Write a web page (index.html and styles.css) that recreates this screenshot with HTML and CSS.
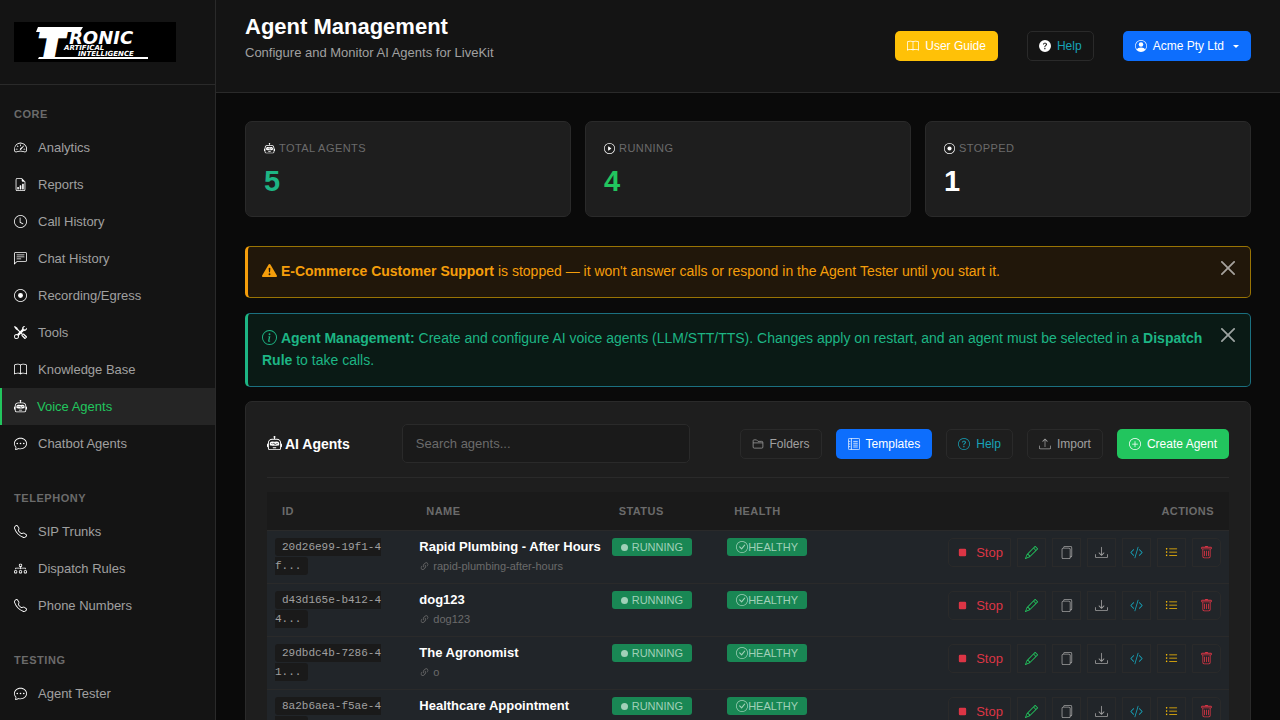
FILE: index.html
```
<!DOCTYPE html>
<html lang="en">
<head>
  <meta charset="UTF-8" />
  <meta name="viewport" content="width=device-width, initial-scale=1.0">
  <title>Agent Management</title>
  <link rel="stylesheet" href="styles.css">
</head>
<body>
  <!-- icon sprite -->
  <svg class="sprite" aria-hidden="true">
    <symbol id="i-speed" viewBox="0 0 16 16"><path d="M8 4a.5.5 0 0 1 .5.5V6a.5.5 0 0 1-1 0V4.500A.5.5 0 0 1 8 4M3.732 5.732a.5.5 0 0 1 .707 0l.915.914a.5.5 0 1 1-.708.708l-.914-.915a.5.5 0 0 1 0-.707M2 10a.5.5 0 0 1 .5-.5h1.586a.5.5 0 0 1 0 1H2.500A.5.5 0 0 1 2 10m9.500 0a.5.5 0 0 1 .5-.5h1.500a.5.5 0 0 1 0 1H12a.5.5 0 0 1-.5-.5m.754-4.246a.39.39 0 0 0-.527-.02L7.547 9.310a.91.91 0 1 0 1.302 1.258l3.434-4.297a.39.39 0 0 0-.029-.518z"/><path fill-rule="evenodd" d="M0 10a8 8 0 1 1 15.547 2.661c-.442 1.253-1.845 1.602-2.932 1.250C11.309 13.488 9.475 13 8 13c-1.474 0-3.310.488-4.615.911-1.087.352-2.490.003-2.932-1.250A8 8 0 0 1 0 10m8-7a7 7 0 0 0-6.603 9.329c.203.575.923.876 1.680.630C4.397 12.533 6.358 12 8 12s3.604.532 4.923.960c.757.245 1.477-.056 1.680-.631A7 7 0 0 0 8 3"/></symbol>
    <symbol id="i-report" viewBox="0 0 16 16"><path d="M10 13.500a.5.5 0 0 0 .5.5h1a.5.5 0 0 0 .5-.5v-6a.5.5 0 0 0-.5-.5h-1a.5.5 0 0 0-.5.5zm-2.500.5a.5.5 0 0 1-.5-.5v-4a.5.5 0 0 1 .5-.5h1a.5.5 0 0 1 .5.5v4a.5.5 0 0 1-.5.5zm-3 0a.5.5 0 0 1-.5-.5v-2a.5.5 0 0 1 .5-.5h1a.5.5 0 0 1 .5.5v2a.5.5 0 0 1-.5.5z"/><path d="M14 14V4.500L9.500 0H4a2 2 0 0 0-2 2v12a2 2 0 0 0 2 2h8a2 2 0 0 0 2-2M9.500 3A1.500 1.500 0 0 0 11 4.500h2V14a1 1 0 0 1-1 1H4a1 1 0 0 1-1-1V2a1 1 0 0 1 1-1h5.500z"/></symbol>
    <symbol id="i-clock" viewBox="0 0 16 16"><path d="M8 3.500a.5.5 0 0 0-1 0V9a.5.5 0 0 0 .252.434l3.500 2a.5.5 0 0 0 .496-.868L8 8.710z"/><path d="M8 16A8 8 0 1 0 8 0a8 8 0 0 0 0 16m7-8A7 7 0 1 1 1 8a7 7 0 0 1 14 0"/></symbol>
    <symbol id="i-chat-text" viewBox="0 0 16 16"><path d="M14 1a1 1 0 0 1 1 1v8a1 1 0 0 1-1 1H4.414A2 2 0 0 0 3 11.586l-2 2V2a1 1 0 0 1 1-1zM2 0a2 2 0 0 0-2 2v12.793a.5.5 0 0 0 .854.353l2.853-2.853A1 1 0 0 1 4.414 12H14a2 2 0 0 0 2-2V2a2 2 0 0 0-2-2z"/><path d="M3 3.500a.5.5 0 0 1 .5-.5h9a.5.5 0 0 1 0 1h-9a.5.5 0 0 1-.5-.5M3 6a.5.5 0 0 1 .5-.5h9a.5.5 0 0 1 0 1h-9A.5.5 0 0 1 3 6m0 2.500a.5.5 0 0 1 .5-.5h5a.5.5 0 0 1 0 1h-5a.5.5 0 0 1-.5-.5"/></symbol>
    <symbol id="i-record" viewBox="0 0 16 16"><path d="M8 15A7 7 0 1 1 8 1a7 7 0 0 1 0 14m0 1A8 8 0 1 0 8 0a8 8 0 0 0 0 16"/><path d="M11 8a3 3 0 1 1-6 0 3 3 0 0 1 6 0"/></symbol>
    <symbol id="i-tools" viewBox="0 0 16 16"><path d="M1 0 0 1l2.200 3.081a1 1 0 0 0 .815.419h.070a1 1 0 0 1 .708.293l2.675 2.675-2.617 2.654A3.003 3.003 0 0 0 0 13a3 3 0 1 0 5.878-.851l2.654-2.617.968.968-.305.914a1 1 0 0 0 .242 1.023l3.270 3.270a.997.997 0 0 0 1.414 0l1.586-1.586a.997.997 0 0 0 0-1.414l-3.270-3.270a1 1 0 0 0-1.023-.242L10.500 9.500l-.960-.960 2.680-2.643A3.005 3.005 0 0 0 16 3q0-.405-.102-.777l-2.140 2.141L12 4l-.364-1.757L13.777.102a3 3 0 0 0-3.675 3.680L7.462 6.460 4.793 3.793a1 1 0 0 1-.293-.707v-.071a1 1 0 0 0-.419-.814zm9.646 10.646a.5.5 0 0 1 .708 0l2.914 2.915a.5.5 0 0 1-.707.707l-2.915-2.914a.5.5 0 0 1 0-.708M3 11l.471.242.529.026.287.445.445.287.026.529L5 13l-.242.471-.026.529-.445.287-.287.445-.529.026L3 15l-.471-.242L2 14.732l-.287-.445L1.268 14l-.026-.529L1 13l.242-.471.026-.529.445-.287.287-.445.529-.026z"/></symbol>
    <symbol id="i-book" viewBox="0 0 16 16"><path d="M1 2.828c.885-.370 2.154-.769 3.388-.893 1.330-.134 2.458.063 3.112.752v9.746c-.935-.530-2.120-.603-3.213-.493-1.180.120-2.370.461-3.287.811zm7.500-.141c.654-.689 1.782-.886 3.112-.752 1.234.124 2.503.523 3.388.893v9.923c-.918-.350-2.107-.692-3.287-.810-1.094-.111-2.278-.039-3.213.492zM8 1.783C7.015.936 5.587.810 4.287.940c-1.514.153-3.042.672-3.994 1.105A.5.5 0 0 0 0 2.500v11a.5.5 0 0 0 .707.455c.882-.400 2.303-.881 3.680-1.020 1.409-.142 2.590.087 3.223.877a.5.5 0 0 0 .780 0c.633-.790 1.814-1.019 3.222-.877 1.378.139 2.800.620 3.681 1.020A.5.5 0 0 0 16 13.500v-11a.5.5 0 0 0-.293-.455c-.952-.433-2.480-.952-3.994-1.105C10.413.809 8.985.936 8 1.783"/></symbol>
    <symbol id="i-robot" viewBox="0 0 16 16"><path d="M6 12.500a.5.5 0 0 1 .5-.5h3a.5.5 0 0 1 0 1h-3a.5.5 0 0 1-.5-.5M3 8.062C3 6.760 4.235 5.765 5.530 5.886a26.600 26.600 0 0 0 4.940 0C11.765 5.765 13 6.760 13 8.062v1.157a.93.93 0 0 1-.765.935c-.845.147-2.340.346-4.235.346s-3.390-.200-4.235-.346A.93.93 0 0 1 3 9.219zm4.542-.827a.25.25 0 0 0-.217.068l-.920.900a25 25 0 0 1-1.871-.183.25.25 0 0 0-.068.495c.550.076 1.232.149 2.020.193a.25.25 0 0 0 .189-.071l.754-.736.847 1.710a.25.25 0 0 0 .404.062l.932-.970a25 25 0 0 0 1.922-.188.25.25 0 0 0-.068-.495c-.538.074-1.207.145-1.980.189a.25.25 0 0 0-.166.076l-.754.785-.842-1.700a.25.25 0 0 0-.182-.135"/><path d="M8.500 1.866a1 1 0 1 0-1 0V3h-2A4.500 4.500 0 0 0 1 7.500V8a1 1 0 0 0-1 1v2a1 1 0 0 0 1 1v1a2 2 0 0 0 2 2h10a2 2 0 0 0 2-2v-1a1 1 0 0 0 1-1V9a1 1 0 0 0-1-1v-.5A4.500 4.500 0 0 0 10.500 3h-2zM14 7.500V13a1 1 0 0 1-1 1H3a1 1 0 0 1-1-1V7.500A3.500 3.500 0 0 1 5.500 4h5A3.500 3.500 0 0 1 14 7.500"/></symbol>
    <symbol id="i-chat-dots" viewBox="0 0 16 16"><path d="M5 8a1 1 0 1 1-2 0 1 1 0 0 1 2 0m4 0a1 1 0 1 1-2 0 1 1 0 0 1 2 0m3 1a1 1 0 1 0 0-2 1 1 0 0 0 0 2"/><path d="m2.165 15.803.020-.004c1.830-.363 2.948-.842 3.468-1.105A9 9 0 0 0 8 15c4.418 0 8-3.134 8-7s-3.582-7-8-7-8 3.134-8 7c0 1.760.743 3.370 1.970 4.600a10.400 10.400 0 0 1-.524 2.318l-.003.011a11 11 0 0 1-.244.637c-.079.186.074.394.273.362a22 22 0 0 0 .693-.125m.8-3.108a1 1 0 0 0-.287-.801C1.618 10.830 1 9.468 1 8c0-3.192 3.004-6 7-6s7 2.808 7 6-3.004 6-7 6a8 8 0 0 1-2.088-.272 1 1 0 0 0-.711.074c-.387.196-1.240.570-2.634.893a11 11 0 0 0 .398-2"/></symbol>
    <symbol id="i-phone" viewBox="0 0 16 16"><path d="M3.654 1.328a.678.678 0 0 0-1.015-.063L1.605 2.300c-.483.484-.661 1.169-.450 1.770a17.600 17.600 0 0 0 4.168 6.608 17.600 17.600 0 0 0 6.608 4.168c.601.211 1.286.033 1.770-.450l1.034-1.034a.678.678 0 0 0-.063-1.015l-2.307-1.794a.68.68 0 0 0-.580-.122l-2.190.547a1.750 1.750 0 0 1-1.657-.459L5.482 8.062a1.750 1.750 0 0 1-.460-1.657l.548-2.190a.68.68 0 0 0-.122-.580zM1.884.511a1.745 1.745 0 0 1 2.612.163L6.290 2.980c.329.423.445.974.315 1.494l-.547 2.190a.68.68 0 0 0 .178.643l2.457 2.457a.68.68 0 0 0 .644.178l2.189-.547a1.750 1.750 0 0 1 1.494.315l2.306 1.794c.829.645.905 1.870.163 2.611l-1.034 1.034c-.740.740-1.846 1.065-2.877.702a18.600 18.600 0 0 1-7.010-4.420 18.600 18.600 0 0 1-4.420-7.009c-.362-1.030-.037-2.137.703-2.877z"/></symbol>
    <symbol id="i-diagram" viewBox="0 0 16 16"><path fill-rule="evenodd" d="M6 3.500A1.500 1.500 0 0 1 7.500 2h1A1.500 1.500 0 0 1 10 3.500v1A1.500 1.500 0 0 1 8.500 6v1H14a.5.5 0 0 1 .5.5v1a.5.5 0 0 1-1 0V8h-5v.5a.5.5 0 0 1-1 0V8h-5v.5a.5.5 0 0 1-1 0v-1A.5.5 0 0 1 2 7h5.500V6A1.500 1.500 0 0 1 6 4.500zM8.500 5a.5.5 0 0 0 .5-.5v-1a.5.5 0 0 0-.5-.5h-1a.5.5 0 0 0-.5.5v1a.5.5 0 0 0 .5.5zM0 11.500A1.500 1.500 0 0 1 1.500 10h1A1.500 1.500 0 0 1 4 11.500v1A1.500 1.500 0 0 1 2.500 14h-1A1.500 1.500 0 0 1 0 12.500zm1.500-.5a.5.5 0 0 0-.5.5v1a.5.5 0 0 0 .5.5h1a.5.5 0 0 0 .5-.5v-1a.5.5 0 0 0-.5-.5zm4.500.5A1.500 1.500 0 0 1 7.500 10h1a1.500 1.500 0 0 1 1.500 1.500v1A1.500 1.500 0 0 1 8.500 14h-1A1.500 1.500 0 0 1 6 12.500zm1.500-.5a.5.5 0 0 0-.5.5v1a.5.5 0 0 0 .5.5h1a.5.5 0 0 0 .5-.5v-1a.5.5 0 0 0-.5-.5zm4.500.5a1.500 1.500 0 0 1 1.500-1.500h1a1.500 1.500 0 0 1 1.500 1.500v1a1.500 1.500 0 0 1-1.500 1.500h-1a1.500 1.500 0 0 1-1.500-1.500zm1.500-.5a.5.5 0 0 0-.5.5v1a.5.5 0 0 0 .5.5h1a.5.5 0 0 0 .5-.5v-1a.5.5 0 0 0-.5-.5z"/></symbol>
    <symbol id="i-play" viewBox="0 0 16 16"><path d="M8 15A7 7 0 1 1 8 1a7 7 0 0 1 0 14m0 1A8 8 0 1 0 8 0a8 8 0 0 0 0 16"/><path d="M6.271 5.055a.5.5 0 0 1 .520.038l3.500 2.500a.5.5 0 0 1 0 .814l-3.500 2.500A.5.5 0 0 1 6 10.500v-5a.5.5 0 0 1 .271-.445"/></symbol>
    <symbol id="i-question-fill" viewBox="0 0 16 16"><path d="M16 8A8 8 0 1 1 0 8a8 8 0 0 1 16 0M5.496 6.033h.825c.138 0 .248-.113.266-.250.090-.656.540-1.134 1.342-1.134.686 0 1.314.343 1.314 1.168 0 .635-.374.927-.965 1.371-.673.489-1.206 1.060-1.168 1.987l.003.217a.25.25 0 0 0 .250.246h.811a.25.25 0 0 0 .250-.250v-.105c0-.718.273-.927 1.010-1.486.609-.463 1.244-.977 1.244-2.056 0-1.511-1.276-2.241-2.673-2.241-1.267 0-2.655.590-2.750 2.286a.237.237 0 0 0 .241.247m2.325 6.443c.610 0 1.029-.394 1.029-.927 0-.552-.420-.940-1.029-.940-.584 0-1.009.388-1.009.940 0 .533.425.927 1.010.927z"/></symbol>
    <symbol id="i-question" viewBox="0 0 16 16"><path d="M8 15A7 7 0 1 1 8 1a7 7 0 0 1 0 14m0 1A8 8 0 1 0 8 0a8 8 0 0 0 0 16"/><path d="M5.255 5.786a.237.237 0 0 0 .241.247h.825c.138 0 .248-.113.266-.250.090-.656.540-1.134 1.342-1.134.686 0 1.314.343 1.314 1.168 0 .635-.374.927-.965 1.371-.673.489-1.206 1.060-1.168 1.987l.003.217a.25.25 0 0 0 .250.246h.811a.25.25 0 0 0 .250-.250v-.105c0-.718.273-.927 1.010-1.486.609-.463 1.244-.977 1.244-2.056 0-1.511-1.276-2.241-2.673-2.241-1.267 0-2.655.590-2.750 2.286m1.557 5.763c0 .533.425.927 1.010.927.609 0 1.028-.394 1.028-.927 0-.552-.420-.940-1.029-.940-.584 0-1.009.388-1.009.940"/></symbol>
    <symbol id="i-person" viewBox="0 0 16 16"><path d="M11 6a3 3 0 1 1-6 0 3 3 0 0 1 6 0"/><path fill-rule="evenodd" d="M0 8a8 8 0 1 1 16 0A8 8 0 0 1 0 8m8-7a7 7 0 0 0-5.468 11.370C3.242 11.226 4.805 10 8 10s4.757 1.225 5.468 2.370A7 7 0 0 0 8 1"/></symbol>
    <symbol id="i-warn" viewBox="0 0 16 16"><path d="M8.982 1.566a1.130 1.130 0 0 0-1.960 0L.165 13.233c-.457.778.091 1.767.980 1.767h13.713c.889 0 1.438-.990.980-1.767zM8 5c.535 0 .954.462.900.995l-.350 3.507a.552.552 0 0 1-1.100 0L7.100 5.995A.905.905 0 0 1 8 5m.002 6a1 1 0 1 1 0 2 1 1 0 0 1 0-2"/></symbol>
    <symbol id="i-info" viewBox="0 0 16 16"><path d="M8 15A7 7 0 1 1 8 1a7 7 0 0 1 0 14m0 1A8 8 0 1 0 8 0a8 8 0 0 0 0 16"/><path d="m8.930 6.588-2.290.287-.082.380.450.083c.294.070.352.176.288.469l-.738 3.468c-.194.897.105 1.319.808 1.319.545 0 1.178-.252 1.465-.598l.088-.416c-.200.176-.492.246-.686.246-.275 0-.375-.193-.304-.533zM9 4.500a1 1 0 1 1-2 0 1 1 0 0 1 2 0"/></symbol>
    <symbol id="i-close" viewBox="0 0 16 16"><path d="M.293.293a1 1 0 0 1 1.414 0L8 6.586 14.293.293a1 1 0 1 1 1.414 1.414L9.414 8l6.293 6.293a1 1 0 0 1-1.414 1.414L8 9.414l-6.293 6.293a1 1 0 0 1-1.414-1.414L6.586 8 .293 1.707a1 1 0 0 1 0-1.414"/></symbol>
    <symbol id="i-folder" viewBox="0 0 16 16"><path d="M1.500 12V3.500A1 1 0 0 1 2.500 2.500H6L8 4.500H13A1.500 1.500 0 0 1 14.500 6V12A1.500 1.500 0 0 1 13 13.500H3A1.500 1.500 0 0 1 1.500 12ZM1.500 6.500H14.500" fill="none" stroke="currentColor"/></symbol>
    <symbol id="i-template" viewBox="0 0 16 16"><path d="M2 .5H14A1.500 1.500 0 0 1 15.500 2V14A1.500 1.500 0 0 1 14 15.500H2A1.500 1.500 0 0 1 .5 14V2A1.500 1.500 0 0 1 2 .5M4.500 .5V15.500M7 4.500H13M7 7H13M7 9.500H13M7 12H13M1 4.500H3M1 8H3M1 11.500H3" fill="none" stroke="currentColor"/></symbol>
    <symbol id="i-upload" viewBox="0 0 16 16"><path d="M.5 9.900a.5.5 0 0 1 .5.5v2.500a1 1 0 0 0 1 1h12a1 1 0 0 0 1-1v-2.500a.5.5 0 0 1 1 0v2.500a2 2 0 0 1-2 2H2a2 2 0 0 1-2-2v-2.500a.5.5 0 0 1 .5-.5"/><path d="M7.646 1.146a.5.5 0 0 1 .708 0l3 3a.5.5 0 0 1-.708.708L8.500 2.707V11.500a.5.5 0 0 1-1 0V2.707L5.354 4.854a.5.5 0 1 1-.708-.708z"/></symbol>
    <symbol id="i-download" viewBox="0 0 16 16"><path d="M.5 9.900a.5.5 0 0 1 .5.5v2.500a1 1 0 0 0 1 1h12a1 1 0 0 0 1-1v-2.500a.5.5 0 0 1 1 0v2.500a2 2 0 0 1-2 2H2a2 2 0 0 1-2-2v-2.500a.5.5 0 0 1 .5-.5"/><path d="M7.646 11.854a.5.5 0 0 0 .708 0l3-3a.5.5 0 0 0-.708-.708L8.500 10.293V1.500a.5.5 0 0 0-1 0v8.793L5.354 8.146a.5.5 0 1 0-.708.708z"/></symbol>
    <symbol id="i-plus" viewBox="0 0 16 16"><path d="M8 15A7 7 0 1 1 8 1a7 7 0 0 1 0 14m0 1A8 8 0 1 0 8 0a8 8 0 0 0 0 16"/><path d="M8 4a.5.5 0 0 1 .5.5v3h3a.5.5 0 0 1 0 1h-3v3a.5.5 0 0 1-1 0v-3h-3a.5.5 0 0 1 0-1h3v-3A.5.5 0 0 1 8 4"/></symbol>
    <symbol id="i-link" viewBox="0 0 16 16"><path d="M4.715 6.542 3.343 7.914a3 3 0 1 0 4.243 4.243l1.828-1.829A3 3 0 0 0 8.586 5.500L8 6.086a1 1 0 0 0-.154.199 2 2 0 0 1 .861 3.337L6.880 11.450a2 2 0 1 1-2.830-2.830l.793-.792a4 4 0 0 1-.128-1.287z"/><path d="M6.586 4.672A3 3 0 0 0 7.414 9.500l.775-.776a2 2 0 0 1-.896-3.346L9.120 3.550a2 2 0 1 1 2.830 2.830l-.793.792c.112.420.155.855.128 1.287l1.372-1.372a3 3 0 1 0-4.243-4.243z"/></symbol>
    <symbol id="i-dot" viewBox="0 0 16 16"><circle cx="8" cy="8" r="8"/></symbol>
    <symbol id="i-check" viewBox="0 0 16 16"><path d="M8 15A7 7 0 1 1 8 1a7 7 0 0 1 0 14m0 1A8 8 0 1 0 8 0a8 8 0 0 0 0 16"/><path d="m10.970 4.970-.020.022-3.473 4.425-2.093-2.094a.75.75 0 0 0-1.060 1.060L6.970 11.030a.75.75 0 0 0 1.079-.020l3.992-4.990a.75.75 0 0 0-1.071-1.050"/></symbol>
    <symbol id="i-stop" viewBox="0 0 16 16"><path d="M5 3.500h6A1.500 1.500 0 0 1 12.500 5v6a1.500 1.500 0 0 1-1.500 1.500H5A1.500 1.500 0 0 1 3.500 11V5A1.500 1.500 0 0 1 5 3.500"/></symbol>
    <symbol id="i-pencil" viewBox="0 0 16 16"><path d="M12.146.146a.5.5 0 0 1 .708 0l3 3a.5.5 0 0 1 0 .708l-10 10a.5.5 0 0 1-.168.110l-5 2a.5.5 0 0 1-.650-.650l2-5a.5.5 0 0 1 .110-.168zM11.207 2.500 13.500 4.793 14.793 3.500 12.500 1.207zm1.586 3L10.500 3.207 4 9.707V10h.5a.5.5 0 0 1 .5.5v.5h.5a.5.5 0 0 1 .5.5v.5h.293zm-9.761 5.175-.106.106-1.528 3.821 3.821-1.528.106-.106A.5.5 0 0 1 5 12.500V12h-.5a.5.5 0 0 1-.5-.5V11h-.5a.5.5 0 0 1-.468-.325"/></symbol>
    <symbol id="i-files" viewBox="0 0 16 16"><path d="M13 0H6a2 2 0 0 0-2 2 2 2 0 0 0-2 2v10a2 2 0 0 0 2 2h7a2 2 0 0 0 2-2 2 2 0 0 0 2-2V2a2 2 0 0 0-2-2m0 13V4a2 2 0 0 0-2-2H5a1 1 0 0 1 1-1h7a1 1 0 0 1 1 1v10a1 1 0 0 1-1 1M3 4a1 1 0 0 1 1-1h7a1 1 0 0 1 1 1v10a1 1 0 0 1-1 1H4a1 1 0 0 1-1-1z"/></symbol>
    <symbol id="i-code" viewBox="0 0 16 16"><path d="M10.478 1.647a.5.5 0 1 0-.956-.294l-4 13a.5.5 0 0 0 .956.294zM4.854 4.146a.5.5 0 0 1 0 .708L1.707 8l3.147 3.146a.5.5 0 0 1-.708.708l-3.500-3.500a.5.5 0 0 1 0-.708l3.500-3.500a.5.5 0 0 1 .708 0m6.292 0a.5.5 0 0 0 0 .708L14.293 8l-3.147 3.146a.5.5 0 0 0 .708.708l3.500-3.500a.5.5 0 0 0 0-.708l-3.500-3.500a.5.5 0 0 0-.708 0"/></symbol>
    <symbol id="i-list" viewBox="0 0 16 16"><path fill-rule="evenodd" d="M5 11.500a.5.5 0 0 1 .5-.5h9a.5.5 0 0 1 0 1h-9a.5.5 0 0 1-.5-.5m0-4a.5.5 0 0 1 .5-.5h9a.5.5 0 0 1 0 1h-9a.5.5 0 0 1-.5-.5m0-4a.5.5 0 0 1 .5-.5h9a.5.5 0 0 1 0 1h-9a.5.5 0 0 1-.5-.5m-3 1a1 1 0 1 0 0-2 1 1 0 0 0 0 2m0 4a1 1 0 1 0 0-2 1 1 0 0 0 0 2m0 4a1 1 0 1 0 0-2 1 1 0 0 0 0 2"/></symbol>
    <symbol id="i-trash" viewBox="0 0 16 16"><path d="M5.500 5.500A.5.5 0 0 1 6 6v6a.5.5 0 0 1-1 0V6a.5.5 0 0 1 .5-.5m2.500 0a.5.5 0 0 1 .5.5v6a.5.5 0 0 1-1 0V6a.5.5 0 0 1 .5-.5m3 .5a.5.5 0 0 0-1 0v6a.5.5 0 0 0 1 0z"/><path d="M14.500 3a1 1 0 0 1-1 1H13v9a2 2 0 0 1-2 2H5a2 2 0 0 1-2-2V4h-.5a1 1 0 0 1-1-1V2a1 1 0 0 1 1-1H6a1 1 0 0 1 1-1h2a1 1 0 0 1 1 1h3.500a1 1 0 0 1 1 1zM4.118 4 4 4.059V13a1 1 0 0 0 1 1h6a1 1 0 0 0 1-1V4.059L11.882 4zM2.500 3h11V2h-11z"/></symbol>
  </svg>

  <div class="app">
    <aside class="sidebar">
      <div class="brand">
        <a href="#" class="brand-link" aria-label="Home">
          <svg class="logo" viewBox="0 0 162 40">
            <rect width="162" height="40" fill="#000"/>
            <path d="M24 5h45l-3 5H22zM25 35h109v2H24z"/>
            <text class="logo-t" x="26" y="34">T</text>
            <text class="logo-name" x="55" y="22">RONIC</text>
            <text class="logo-sub" x="50" y="28">ARTIFICAL</text>
            <text class="logo-sub" x="64" y="34">INTELLIGENCE</text>
          </svg>
        </a>
      </div>
      <nav class="nav">
        <div class="nav-section">
          <div class="nav-title">Core</div>
          <a href="#" class="nav-item"><svg class="icon"><use href="#i-speed"/></svg>Analytics</a>
          <a href="#" class="nav-item"><svg class="icon"><use href="#i-report"/></svg>Reports</a>
          <a href="#" class="nav-item"><svg class="icon"><use href="#i-clock"/></svg>Call History</a>
          <a href="#" class="nav-item"><svg class="icon"><use href="#i-chat-text"/></svg>Chat History</a>
          <a href="#" class="nav-item"><svg class="icon"><use href="#i-record"/></svg>Recording/Egress</a>
          <a href="#" class="nav-item"><svg class="icon"><use href="#i-tools"/></svg>Tools</a>
          <a href="#" class="nav-item"><svg class="icon"><use href="#i-book"/></svg>Knowledge Base</a>
          <a href="#" class="nav-item active"><svg class="icon"><use href="#i-robot"/></svg>Voice Agents</a>
          <a href="#" class="nav-item"><svg class="icon"><use href="#i-chat-dots"/></svg>Chatbot Agents</a>
        </div>
        <div class="nav-section">
          <div class="nav-title">Telephony</div>
          <a href="#" class="nav-item"><svg class="icon"><use href="#i-phone"/></svg>SIP Trunks</a>
          <a href="#" class="nav-item"><svg class="icon"><use href="#i-diagram"/></svg>Dispatch Rules</a>
          <a href="#" class="nav-item"><svg class="icon"><use href="#i-phone"/></svg>Phone Numbers</a>
        </div>
        <div class="nav-section">
          <div class="nav-title">Testing</div>
          <a href="#" class="nav-item"><svg class="icon"><use href="#i-chat-dots"/></svg>Agent Tester</a>
        </div>
      </nav>
    </aside>

    <main class="main">
      <header class="topbar">
        <div>
          <h1>Agent Management</h1>
          <p class="subtitle">Configure and Monitor AI Agents for LiveKit</p>
        </div>
        <div class="topbar-actions">
          <a href="#" class="btn btn-warning"><svg class="icon"><use href="#i-book"/></svg>User Guide</a>
          <button type="button" class="btn btn-outline info"><svg class="icon white"><use href="#i-question-fill"/></svg>Help</button>
          <button type="button" class="btn btn-primary"><svg class="icon"><use href="#i-person"/></svg>Acme Pty Ltd<span class="caret"></span></button>
        </div>
      </header>

      <div class="content">
        <div class="stats">
          <div class="stat">
            <div class="stat-label"><svg class="icon"><use href="#i-robot"/></svg>Total Agents</div>
            <div class="stat-value teal">5</div>
          </div>
          <div class="stat">
            <div class="stat-label"><svg class="icon"><use href="#i-play"/></svg>Running</div>
            <div class="stat-value green">4</div>
          </div>
          <div class="stat">
            <div class="stat-label"><svg class="icon"><use href="#i-record"/></svg>Stopped</div>
            <div class="stat-value">1</div>
          </div>
        </div>

        <div class="alert alert-warning" role="alert">
          <svg class="icon"><use href="#i-warn"/></svg>
          <strong>E-Commerce Customer Support</strong> is stopped — it won't answer calls or respond in the Agent Tester until you start it.
          <button type="button" class="alert-close" aria-label="Close"><svg class="icon"><use href="#i-close"/></svg></button>
        </div>
        <div class="alert alert-info" role="alert">
          <svg class="icon"><use href="#i-info"/></svg>
          <strong>Agent Management:</strong> Create and configure AI voice agents (LLM/STT/TTS). Changes apply on restart, and an agent must be selected in a <strong>Dispatch Rule</strong> to take calls.
          <button type="button" class="alert-close" aria-label="Close"><svg class="icon"><use href="#i-close"/></svg></button>
        </div>

        <section class="card">
          <div class="card-header">
            <h2><svg class="icon"><use href="#i-robot"/></svg>AI Agents</h2>
            <input type="text" class="search" id="search" placeholder="Search agents..." aria-label="Search agents">
            <div class="card-actions">
              <button type="button" class="btn btn-outline"><svg class="icon"><use href="#i-folder"/></svg>Folders</button>
              <button type="button" class="btn btn-primary"><svg class="icon"><use href="#i-template"/></svg>Templates</button>
              <button type="button" class="btn btn-outline info"><svg class="icon"><use href="#i-question"/></svg>Help</button>
              <button type="button" class="btn btn-outline"><svg class="icon"><use href="#i-upload"/></svg>Import</button>
              <button type="button" class="btn btn-success"><svg class="icon"><use href="#i-plus"/></svg>Create Agent</button>
            </div>
          </div>
          <table class="agents">
            <thead>
              <tr>
                <th class="col-id">ID</th>
                <th class="col-name">Name</th>
                <th class="col-state">Status</th>
                <th class="col-state">Health</th>
                <th class="col-actions">Actions</th>
              </tr>
            </thead>
            <tbody id="agentRows"></tbody>
          </table>
        </section>
      </div>
    </main>
  </div>

  <script>
    const agents = [
      { id: "20d26e99-19f1-4f...", name: "Rapid Plumbing - After Hours", slug: "rapid-plumbing-after-hours" },
      { id: "d43d165e-b412-44...", name: "dog123", slug: "dog123" },
      { id: "29dbdc4b-7286-41...", name: "The Agronomist", slug: "o" },
      { id: "8a2b6aea-f5ae-4f...", name: "Healthcare Appointment", slug: "healthcare-appointment" }
    ];

    const actions = [
      ["pencil", "Edit", "green"],
      ["files", "Duplicate", "grey"],
      ["download", "Export", "grey"],
      ["code", "Embed code", "cyan"],
      ["list", "Logs", "yellow"],
      ["trash", "Delete", "red"]
    ];

    function icon(name) {
      return `<svg class="icon"><use href="#i-${name}"/></svg>`;
    }

    function renderAgents(list) {
      const buttons = actions.map(a =>
        `<button type="button" class="act ${a[2]}" title="${a[1]}" aria-label="${a[1]}">${icon(a[0])}</button>`
      ).join("");

      document.getElementById("agentRows").innerHTML = list.map(a => `
        <tr>
          <td><div class="id-wrap"><code>${a.id}</code></div></td>
          <td>
            <div class="agent-name">${a.name}</div>
            <div class="agent-slug">${icon("link")}${a.slug}</div>
          </td>
          <td><span class="badge running">${icon("dot")}Running</span></td>
          <td><span class="badge healthy">${icon("check")}Healthy</span></td>
          <td><div class="row-actions">
            <button type="button" class="act act-stop red">${icon("stop")}Stop</button>${buttons}
          </div></td>
        </tr>`).join("");
    }

    document.getElementById("search").addEventListener("input", e => {
      const q = e.target.value.toLowerCase();
      renderAgents(agents.filter(a => a.name.toLowerCase().includes(q)));
    });

    renderAgents(agents);
  </script>
</body>
</html>
```

FILE: styles.css
```
* {
  box-sizing: border-box;
}
body {
  margin: 0;
  background: #0a0a0a;
  color: #fff;
  font-family: "Liberation Sans", Arial, sans-serif;
  font-size: 14px;
  line-height: 22px;
}
h1, h2, p {
  margin: 0;
}
a {
  text-decoration: none;
}
button, input {
  font-family: inherit;
}
.sprite {
  display: none;
}
.icon {
  width: 13px;
  height: 13px;
  fill: currentColor;
  flex: none;
}
.green { color: #22c55e; }
.teal { color: #1db584; }
.grey { color: #a0a0a0; }
.cyan { color: #17a2b8; }
.yellow { color: #ffc107; }
.red { color: #dc3545; }
.white { color: #fff; }

.app {
  display: flex;
  height: 100vh;
}

/* sidebar */
.sidebar {
  width: 216px;
  flex: none;
  background: #141414;
  border-right: 1px solid #2a2a2a;
  overflow: hidden;
}
.brand {
  padding: 22px 14px;
  border-bottom: 1px solid #2a2a2a;
}
.brand-link, .logo {
  display: block;
}
.logo {
  width: 162px;
  height: 40px;
  fill: #fff;
  font-family: "DejaVu Sans", sans-serif;
  font-weight: bold;
  font-style: italic;
}
.logo-t {
  font-size: 34px;
  stroke: #fff;
  stroke-width: 5px;
}
.logo-name { font-size: 18px; }
.logo-sub { font-size: 7px; }
.nav {
  padding: 14px 0;
}
.nav-section {
  margin-bottom: 21px;
}
.nav-title {
  padding: 7px 14px;
  font-size: 11px;
  font-weight: bold;
  line-height: 16px;
  letter-spacing: 0.05em;
  text-transform: uppercase;
  color: #6b6b6b;
}
.nav-item {
  display: flex;
  align-items: center;
  gap: 11px;
  height: 37px;
  padding: 0 14px;
  font-size: 13px;
  color: #a0a0a0;
}
.nav-item .icon {
  color: #fff;
}
.nav-item.active {
  padding-left: 12px;
  gap: 10px;
  border-left: 2px solid #22c55e;
  background: #252525;
  color: #22c55e;
}

/* header */
.main {
  flex: 1;
  min-width: 0;
  overflow-y: auto;
  scrollbar-width: none;
}
.topbar {
  display: flex;
  justify-content: space-between;
  align-items: center;
  padding: 14px 29px;
  background: #141414;
  border-bottom: 1px solid #2a2a2a;
}
h1 {
  font-size: 22px;
  line-height: 26px;
}
.subtitle {
  margin: 3px 0 15px;
  font-size: 13px;
  line-height: 20px;
  color: #a0a0a0;
}
.topbar-actions {
  display: flex;
  gap: 29px;
}
.btn {
  display: inline-flex;
  align-items: center;
  gap: 6px;
  height: 30px;
  padding: 0 11px;
  border: 1px solid transparent;
  border-radius: 5px;
  font-size: 12px;
  line-height: 18px;
  color: #fff;
  white-space: nowrap;
  cursor: pointer;
}
.btn .icon {
  width: 12px;
  height: 12px;
}
.btn-warning { background: #ffc107; }
.btn-primary { background: #0d6efd; }
.btn-success { background: #22c55e; }
.btn-outline {
  background: transparent;
  border-color: #2a2a2a;
  color: #a0a0a0;
}
.btn-outline.info {
  color: #17a2b8;
}
.caret {
  margin-left: 3px;
  border-top: 3px solid #fff;
  border-left: 3px solid transparent;
  border-right: 3px solid transparent;
}

/* content */
.content {
  padding: 28px 29px;
}
.stats {
  display: grid;
  grid-template-columns: repeat(3, 1fr);
  gap: 14px;
  margin-bottom: 29px;
}
.stat {
  padding: 18px;
  background: #1e1e1e;
  border: 1px solid #2a2a2a;
  border-radius: 7px;
}
.stat-label {
  display: flex;
  align-items: center;
  gap: 4px;
  font-size: 11px;
  line-height: 16px;
  letter-spacing: 0.04em;
  text-transform: uppercase;
  color: #6b6b6b;
}
.stat-label .icon {
  width: 11px;
  height: 11px;
  color: #fff;
}
.stat-value {
  margin-top: 8px;
  font-size: 29px;
  font-weight: bold;
  line-height: 34px;
}

.alert {
  position: relative;
  margin-bottom: 15px;
  padding: 13px 22px 15px 14px;
  border: 1px solid;
  border-left-width: 3px;
  border-radius: 5px;
}
.alert > .icon {
  width: 15px;
  height: 15px;
  vertical-align: -2px;
}
.alert-warning {
  background: #21170a;
  border-color: #997404;
  border-left-color: #f59e0b;
  color: #f59e0b;
}
.alert-info {
  margin-bottom: 14px;
  background: #0a1a15;
  border-color: #1b7080;
  border-left-color: #1db584;
  color: #1db584;
}
.alert-close {
  position: absolute;
  top: 14px;
  right: 15px;
  padding: 0;
  border: 0;
  background: none;
  color: #fff;
  line-height: 0;
  opacity: 0.6;
  cursor: pointer;
}
.alert-close .icon {
  width: 14px;
  height: 14px;
}

/* agents card */
.card {
  padding: 22px 21px;
  background: #1e1e1e;
  border: 1px solid #2a2a2a;
  border-radius: 7px;
}
.card-header {
  display: flex;
  align-items: center;
  gap: 14px;
  padding-bottom: 14px;
  margin-bottom: 14px;
  border-bottom: 1px solid #2a2a2a;
}
h2 {
  display: flex;
  align-items: center;
  gap: 3px;
  margin-right: 38px;
  font-size: 14px;
  line-height: 22px;
  white-space: nowrap;
}
h2 .icon {
  width: 15px;
  height: 15px;
}
.search {
  flex: none;
  width: 30%;
  height: 39px;
  padding: 0 13px;
  background: #1a1a1a;
  border: 1px solid #2a2a2a;
  border-radius: 5px;
  font-size: 13px;
  color: #fff;
}
.search::placeholder {
  color: #6b6b6b;
}
.card-actions {
  display: flex;
  gap: 14px;
  margin-left: auto;
}

.agents {
  width: 100%;
  table-layout: fixed;
  border-collapse: separate;
  border-spacing: 0;
}
.agents th {
  height: 39px;
  padding: 0 15px;
  background: #1a1a1a;
  border-bottom: 1px solid #2a2a2a;
  font-size: 11px;
  letter-spacing: 0.04em;
  line-height: 16px;
  text-align: left;
  text-transform: uppercase;
  color: #6b6b6b;
}
.agents .col-id { width: 15%; }
.agents .col-name { width: 20%; }
.agents .col-state { width: 12%; }
.agents .col-actions { text-align: right; }
.agents td {
  padding: 7px 8px;
  background: #212529;
  border-bottom: 1px solid #2a2a2a;
  vertical-align: top;
}
.id-wrap {
  width: 108px;
  font-family: "Liberation Mono", monospace;
  font-size: 11px;
  line-height: 19px;
  word-break: break-all;
}
code {
  padding: 3px 7px;
  border-radius: 3px;
  background: #1a1a1a;
  font: inherit;
  color: #a0a0a0;
}
.agent-name {
  font-size: 13px;
  font-weight: bold;
  line-height: 18px;
  white-space: nowrap;
}
.agent-slug {
  display: flex;
  align-items: center;
  gap: 3px;
  font-size: 11px;
  line-height: 20px;
  color: #6b6b6b;
}
.agent-slug .icon {
  width: 11px;
  height: 11px;
}
.badge {
  display: inline-flex;
  align-items: center;
  height: 18px;
  padding: 0 9px;
  border-radius: 3px;
  background: #198754;
  font-size: 11px;
  line-height: 18px;
  text-transform: uppercase;
  vertical-align: top;
  color: #a0d0b8;
}
.running {
  gap: 4px;
}
.running .icon {
  width: 7px;
  height: 7px;
}
.healthy .icon {
  width: 12px;
  height: 12px;
}
.row-actions {
  display: flex;
  justify-content: flex-end;
  gap: 6px;
}
.act {
  display: inline-flex;
  align-items: center;
  justify-content: center;
  width: 29px;
  height: 29px;
  padding: 0;
  background: transparent;
  border: 1px solid #2a2a2a;
  font-size: 13px;
  cursor: pointer;
}
.act-stop {
  width: 63px;
  gap: 7px;
  border-radius: 5px 0 0 5px;
}
.act:last-child {
  border-radius: 0 5px 5px 0;
}
```
